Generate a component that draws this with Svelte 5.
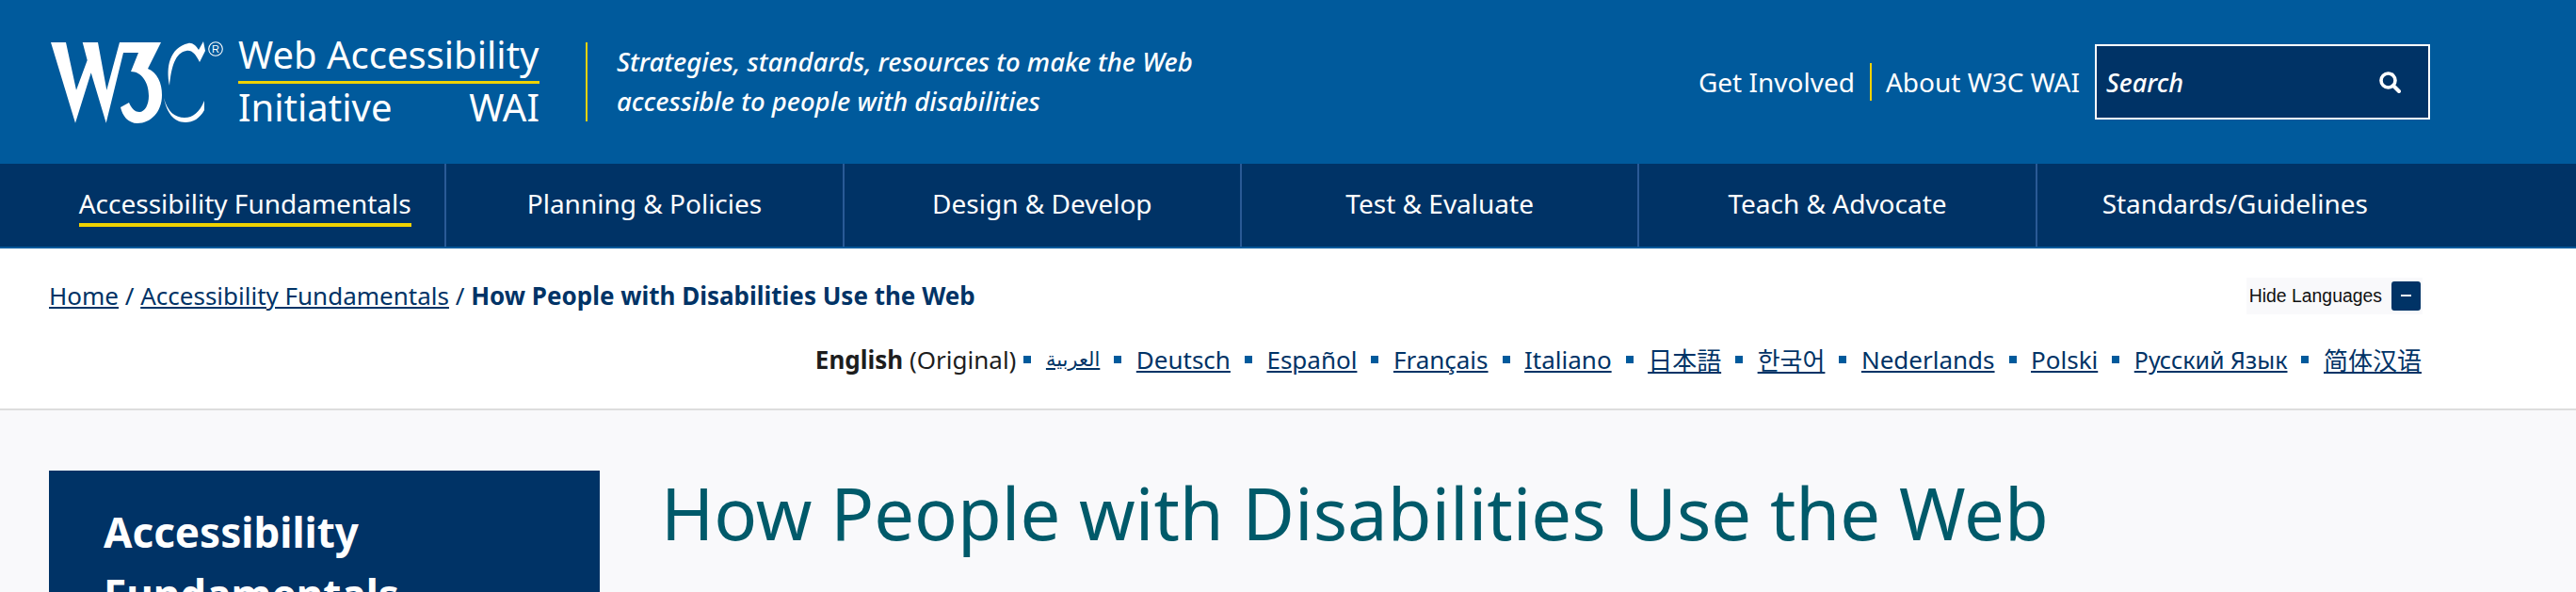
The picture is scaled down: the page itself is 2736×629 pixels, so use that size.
<script>
  const nav = ['Accessibility Fundamentals','Planning & Policies','Design & Develop','Test & Evaluate','Teach & Advocate','Standards/Guidelines'];
  const langs = [
    { t:'العربية', l:'ar' },{ t:'Deutsch', l:'de' },{ t:'Español', l:'es' },{ t:'Français', l:'fr' },{ t:'Italiano', l:'it' },
    { t:'日本語', l:'ja' },{ t:'한국어', l:'ko' },{ t:'Nederlands', l:'nl' },{ t:'Polski', l:'pl' },{ t:'Русский Язык', l:'ru' },{ t:'简体汉语', l:'zh-Hans' }
  ];
</script>

<div class="page">
  <header class="top">
    <div class="brand">
      <svg class="logo" viewBox="52 38 196 96" aria-label="W3C" role="img">
        <path fill="#fff" d="M54 44H70L81 94.7 92.7 63 87.7 44H104L113.3 94.7 127 44H171L157 72C167 76 172 87 172 100 172 118 160 130 146 130 136 130 130 122 128 113L137 108C140 115 144 118 148 118 154 118 158 110 158 101 158 86 150 75 139 75L147 55H131L112.7 129.7 96.7 76.3 80 129.7Z"/>
        <path fill="#fff" d="M180 90C176 70 180 50 200 45 204 44 208 47 211 52L216 43 218 53 212 65C208 57 204 52 198 53 186 55 182 70 180 90Z"/>
        <path fill="#fff" d="M174 103C178 118 186 124 196 124 205 124 212 118 217 106L217 116C212 125 205 129 197 129 184 129 177 118 174 103Z"/>
        <circle cx="229" cy="51" r="7.3" fill="none" stroke="#fff" stroke-width="1.1"/>
        <text x="229" y="55" fill="#fff" text-anchor="middle" class="reg">R</text>
      </svg>
      <div class="wai">
        <div class="wai-top">Web Accessibility</div>
        <div class="wai-bottom"><span>Initiative</span><span>WAI</span></div>
      </div>
      <p class="tagline">Strategies, standards, resources to make the Web<br />accessible to people with disabilities</p>
    </div>
    <div class="tools">
      <a href="#top">Get Involved</a>
      <span class="tool-sep"></span>
      <a href="#top">About W3C WAI</a>
      <div class="search">
        <span>Search</span>
        <svg viewBox="0 0 24 24" class="mag" aria-hidden="true"><circle cx="10.5" cy="10.5" r="7.5" fill="none" stroke="#fff" stroke-width="3.6"/><path d="M16 16l6 6" stroke="#fff" stroke-width="4" stroke-linecap="round"/></svg>
      </div>
    </div>
  </header>

  <nav class="mainnav">
    {#each nav as item, i}
      <a href="#top" class="cell"><span class:current={i === 0}>{item}</span></a>
    {/each}
  </nav>

  <section class="sub">
    <div class="crumb-row">
      <div class="crumbs"><a href="#top">Home</a> / <a href="#top">Accessibility Fundamentals</a> / <strong>How People with Disabilities Use the Web</strong></div>
      <div class="hide"><span>Hide Languages</span><button aria-label="Hide Languages"><i></i></button></div>
    </div>
    <ul class="langs">
      <li class="orig"><strong>English</strong> (Original)</li>
      {#each langs as x}
        <li><a href="#top" lang={x.l} class={x.l}>{x.t}</a></li>
      {/each}
    </ul>
  </section>

  <main class="body">
    <aside class="side"><h2>Accessibility Fundamentals</h2></aside>
    <h1>How People with Disabilities Use the Web</h1>
  </main>
</div>

<style>
  :global(body) { margin: 0; background: #f9f9fb; }
  .page { height: 629px; overflow: hidden; font-family: "Noto Sans", "Noto Sans CJK JP", sans-serif; font-size: 28px; color: #1d1d1d; background: #f9f9fb; }
  a { color: inherit; }
  .top { height: 174px; box-sizing: border-box; padding: 0 155px 0 52px; background: #005a9c; color: #fff; display: flex; justify-content: space-between; align-items: center; }
  .brand { display: flex; align-items: center; }
  .logo { width: 196px; height: 96px; display: block; }
  .reg { font-family: "Liberation Sans", sans-serif; font-size: 11px; }
  .wai { width: 320px; margin-left: 5px; font-size: 40px; line-height: 50px; }
  .wai-top { line-height: 46px; border-bottom: 3px solid #f0d200; padding-bottom: 5px; }
  .wai-bottom { display: flex; justify-content: space-between; }
  .tagline { margin: 0 0 0 49px; border-left: 2px solid #f0d200; padding-left: 31px; font-style: italic; font-weight: 500; font-size: 27.5px; line-height: 42px; }
  .tools { display: flex; align-items: center; }
  .tools a { text-decoration: none; font-size: 28px; }
  .tool-sep { width: 2px; height: 40px; background: #f0d200; margin: 0 15px 0 16px; }
  .search { width: 356px; height: 80px; box-sizing: border-box; margin-left: 16px; border: 2px solid #fff; background: #036; display: flex; align-items: center; justify-content: space-between; padding: 0 29px 0 10px; font-style: italic; font-weight: 500; font-size: 27px; }
  .mag { width: 24px; height: 24px; }
  .mainnav { height: 90px; box-sizing: border-box; padding: 0 152px 0 50px; background: #036; display: grid; grid-template-columns: repeat(6, 1fr); border-bottom: 2px solid #005a9c; color: #fff; }
  .cell { display: flex; align-items: center; justify-content: center; text-decoration: none; border-left: 2px solid #2a5a96; }
  .cell:first-child { border-left: 0; padding-right: 2px; }
  .cell span { padding: 2px 0; border-bottom: 4px solid transparent; }
  .cell span.current { border-bottom-color: #f0d200; }
  .sub { height: 172px; box-sizing: border-box; background: #fff; border-bottom: 2px solid #ddd; padding: 0 163px 0 52px; color: #036; font-size: 26px; }
  .crumb-row { display: flex; justify-content: space-between; align-items: center; height: 100px; }
  .hide { display: flex; align-items: center; gap: 10px; background: #f9f9fb; padding: 4px 2px 4px 3px; font-family: "Liberation Sans", sans-serif; font-size: 19.4px; color: #111; }
  .hide button { width: 31px; height: 31px; border: 0; padding: 0; border-radius: 3px; background: #036; display: flex; align-items: center; justify-content: center; }
  .hide i { display: block; width: 11px; height: 2px; background: #fff; }
  .langs { margin: 0 1px 0 0; padding: 0; list-style: none; display: flex; justify-content: flex-end; align-items: center; height: 36px; }
  .langs li { display: flex; align-items: center; }
  .langs li.orig { display: block; color: #1d1d1d; white-space: pre; }
  .langs li + li::before { content: ""; width: 8px; height: 8px; background: #005a9c; margin: 0 15.5px 0 15px; }
  .langs li:nth-child(2)::before { margin-left: 8px; }
  .langs .ar { font-family: "DejaVu Sans", sans-serif; font-size: 21px; }
  .langs .ru { font-size: 25px; }
  .body { display: flex; padding: 64px 0 0 52px; align-items: flex-start; }
  .side { width: 585px; height: 300px; box-sizing: border-box; padding: 32px 58px; background: #036; color: #fff; }
  .side h2 { margin: 0; font-size: 44px; line-height: 66px; font-weight: 700; }
  h1 { margin: 0 0 0 65px; font-size: 76px; line-height: 90px; font-weight: 400; color: #005a6a; }
</style>
